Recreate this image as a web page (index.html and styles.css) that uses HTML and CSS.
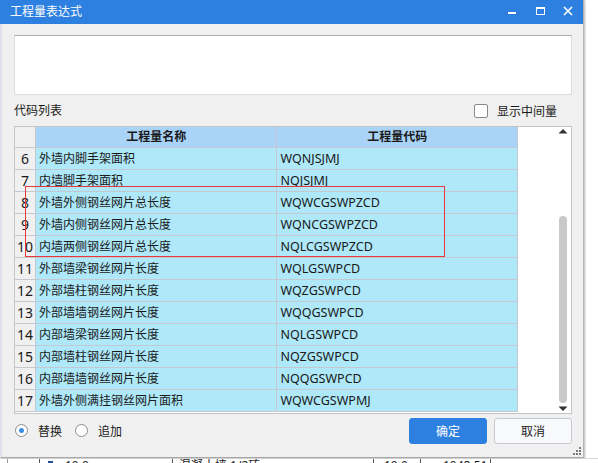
FILE: index.html
```html
<!DOCTYPE html>
<html lang="zh-CN">
<head>
<meta charset="utf-8">
<title>工程量表达式</title>
<link rel="stylesheet" href="styles.css">
</head>
<body>
<div class="screen">
  <div class="top">
    <div class="dialog">
      <div class="titlebar">
        <span class="title">工程量表达式</span>
        <div class="controls">
          <svg class="ctl" width="28" height="24" viewBox="0 0 28 24"><rect x="10" y="12" width="8" height="2" fill="#fff"/></svg>
          <svg class="ctl" width="28" height="24" viewBox="0 0 28 24"><rect x="10.5" y="7.5" width="8" height="7" fill="none" stroke="#fff" stroke-width="1"/><rect x="10" y="7" width="9" height="2" fill="#fff"/></svg>
          <svg class="ctl" width="28" height="24" viewBox="0 0 28 24"><path d="M10 7 L18 15 M18 7 L10 15" stroke="#fff" stroke-width="1.6"/></svg>
        </div>
      </div>
      <div class="body">
        <div class="expr"></div>
        <div class="listhead">
          <span class="label">代码列表</span>
          <label class="chk"><span class="box"></span><span>显示中间量</span></label>
        </div>
        <div class="table">
          <div class="grid">
            <div class="row head">
              <div class="num"></div>
              <div class="name">工程量名称</div>
              <div class="code">工程量代码</div>
            </div>
            <div class="row"><div class="num">6</div><div class="name">外墙内脚手架面积</div><div class="code">WQNJSJMJ</div></div>
            <div class="row"><div class="num">7</div><div class="name">内墙脚手架面积</div><div class="code">NQJSJMJ</div></div>
            <div class="row"><div class="num">8</div><div class="name">外墙外侧钢丝网片总长度</div><div class="code">WQWCGSWPZCD</div></div>
            <div class="row"><div class="num">9</div><div class="name">外墙内侧钢丝网片总长度</div><div class="code">WQNCGSWPZCD</div></div>
            <div class="row"><div class="num">10</div><div class="name">内墙两侧钢丝网片总长度</div><div class="code">NQLCGSWPZCD</div></div>
            <div class="row"><div class="num">11</div><div class="name">外部墙梁钢丝网片长度</div><div class="code">WQLGSWPCD</div></div>
            <div class="row"><div class="num">12</div><div class="name">外部墙柱钢丝网片长度</div><div class="code">WQZGSWPCD</div></div>
            <div class="row"><div class="num">13</div><div class="name">外部墙墙钢丝网片长度</div><div class="code">WQQGSWPCD</div></div>
            <div class="row"><div class="num">14</div><div class="name">内部墙梁钢丝网片长度</div><div class="code">NQLGSWPCD</div></div>
            <div class="row"><div class="num">15</div><div class="name">内部墙柱钢丝网片长度</div><div class="code">NQZGSWPCD</div></div>
            <div class="row"><div class="num">16</div><div class="name">内部墙墙钢丝网片长度</div><div class="code">NQQGSWPCD</div></div>
            <div class="row"><div class="num">17</div><div class="name">外墙外侧满挂钢丝网片面积</div><div class="code">WQWCGSWPMJ</div></div>
          </div>
          <div class="scrollbar">
            <svg class="arrow" width="12" height="8" viewBox="0 0 12 8"><path d="M1.5 6.5 L6 2 L10.5 6.5 Z" fill="#333"/></svg>
            <div class="track"><div class="thumb"></div></div>
            <svg class="arrow" width="12" height="8" viewBox="0 0 12 8"><path d="M1.5 1.5 L6 6 L10.5 1.5 Z" fill="#333"/></svg>
          </div>
          <div class="mark"></div>
        </div>
        <div class="footer">
          <label class="radio"><span class="ring on"></span><span>替换</span></label>
          <label class="radio"><span class="ring"></span><span>追加</span></label>
          <div class="spacer"></div>
          <button class="btn primary">确定</button>
          <button class="btn">取消</button>
        </div>
        <div class="grip">
          <svg width="8" height="8" viewBox="0 0 8 8"><g fill="#7a7a7a"><rect x="6" y="0" width="2" height="2"/><rect x="3" y="3" width="2" height="2"/><rect x="6" y="3" width="2" height="2"/><rect x="0" y="6" width="2" height="2"/><rect x="3" y="6" width="2" height="2"/><rect x="6" y="6" width="2" height="2"/></g></svg>
        </div>
      </div>
    </div>
    <div class="side"></div>
  </div>
  <div class="bgrow">
    <div class="bgc c1"></div>
    <div class="bgc c2"></div>
    <div class="bgc c3"><span class="ico"></span><span>10.0</span></div>
    <div class="bgc c4">混凝土墙 1/2砖</div>
    <div class="bgc c5">10.0</div>
    <div class="bgc c6">1048.51</div>
    <div class="bgc c7"></div>
  </div>
</div>
</body>
</html>
```
FILE: styles.css
```css
* { box-sizing: border-box; }
html, body { margin: 0; padding: 0; }
body {
  font-family: "Noto Sans", "Noto Sans CJK SC", sans-serif;
  font-size: 12px;
  color: #1a1a1a;
  background: #fff;
}
.screen {
  width: 598px;
  height: 463px;
  overflow: hidden;
  display: flex;
  flex-direction: column;
  background: #fff;
}
.top { display: flex; height: 458px; flex: none; }
.dialog {
  width: 584px;
  height: 458px;
  display: flex;
  flex-direction: column;
  background: #f0f0f0;
  border-left: 2px solid #dfe2ea;
  border-right: 1px solid #b4b4b4;
  border-bottom: 1px solid #a8a8a8;
  box-shadow: 1px 1px 0 #d0d0d0;
  position: relative;
}
.side {
  flex: 1;
  background: #fff;
  border-left: 2px solid #e4e4e4;
}
.titlebar {
  height: 24px;
  flex: none;
  background: #2e80e0;
  display: flex;
  align-items: center;
  margin-left: -2px;
  padding-left: 10px;
}
.title { color: #fff; font-size: 12px; line-height: 24px; flex: 1; }
.controls { display: flex; margin-right: 1px; }
.ctl { display: block; }
.body {
  flex: 1;
  display: flex;
  flex-direction: column;
  padding: 11px 11px 0 12px;
  position: relative;
}
.expr {
  height: 60px;
  flex: none;
  background: #fff;
  border: 1px solid #dadde4;
  border-top-color: #a9a9a9;
}
.listhead {
  height: 31px;
  flex: none;
  display: flex;
  align-items: center;
  padding-top: 1px;
}
.label { flex: 1; line-height: 16px; }
.chk { display: flex; align-items: center; margin-right: 15px; }
.box {
  width: 14px;
  height: 14px;
  border: 1px solid #8a8a8a;
  border-radius: 2px;
  background: #fff;
  margin-right: 9px;
}
.table {
  height: 288px;
  flex: none;
  background: #fff;
  border: 1px solid #c4c4c4;
  display: flex;
  position: relative;
}
.grid { width: 503px; flex: none; }
.row { display: flex; height: 22px; }
.row.head { height: 21px; }
.row > div {
  border-right: 1px solid #c4c9d1;
  border-bottom: 1px solid #c4c9d1;
  line-height: 21px;
  white-space: nowrap;
  overflow: hidden;
}
.num {
  width: 21px;
  background: #f0f0f0;
  text-align: center;
  font-size: 14px;
}
.name { width: 242px; background: #aee8f9; padding-left: 3px; font-size: 12px; }
.code { width: 241px; background: #aee8f9; padding-left: 3px; font-size: 12.5px; }
.head .name, .head .code {
  background: #aad3f8;
  text-align: center;
  font-weight: bold;
  padding-left: 0;
  line-height: 20px;
  font-size: 12px;
}
.head .num { line-height: 20px; }
.scrollbar {
  margin-left: auto;
  width: 14px;
  margin-right: 1px;
  display: flex;
  flex-direction: column;
  align-items: center;
}
.arrow { display: block; flex: none; margin-top: 0; }
.track { flex: 1; position: relative; width: 100%; }
.thumb {
  position: absolute;
  left: 3px;
  width: 8px;
  top: 81px;
  bottom: 2px;
  background: #c9c9c9;
  border-radius: 4px;
}
.mark {
  position: absolute;
  left: 10px;
  top: 59px;
  width: 420px;
  height: 71px;
  border: 1px solid #e8383a;
  pointer-events: none;
}
.footer {
  flex: 1;
  display: flex;
  align-items: center;
  padding-bottom: 10px;
}
.radio { display: flex; align-items: center; margin-right: 12px; margin-left: 1px; }
.ring {
  width: 13px;
  height: 13px;
  border: 1px solid #8c8c8c;
  border-radius: 50%;
  background: #fff;
  margin-right: 10px;
  position: relative;
}
.ring.on::after {
  content: "";
  position: absolute;
  left: 3px; top: 3px;
  width: 5px; height: 5px;
  border-radius: 50%;
  background: #3a8ee6;
}
.spacer { flex: 1; }
.btn {
  width: 78px;
  height: 26px;
  font-family: inherit;
  font-size: 12px;
  border-radius: 3px;
  border: 1px solid #c6cad3;
  background: #f8f9fb;
  color: #1a1a1a;
  margin-left: 7px;
  padding: 0;
}
.btn.primary { background: #2e80e0; border-color: #2e80e0; color: #fff; margin-left: 0; }
.grip { position: absolute; right: 2px; bottom: 2px; line-height: 0; }
.bgrow {
  height: 5px;
  flex: none;
  display: flex;
  background: #fff;
  border-top: 1px solid #d6d6d6;
  overflow: hidden;
  font-size: 12px;
}
.bgc {
  border-right: 1px solid #555;
  line-height: 14px;
  margin-top: 0;
  padding-left: 6px;
  white-space: nowrap;
  display: flex;
  align-items: flex-start;
}
.c1 { width: 8px; padding: 0; border-right-color: #999; }
.c2 { width: 32px; padding: 0; }
.c3 { width: 133px; padding-left: 8px; }
.ico { width: 5px; height: 6px; background: #2450a0; margin-top: 2px; margin-right: 12px; }
.c4 { width: 201px; }
.c5 { width: 47px; padding-left: 10px; }
.c6 { width: 70px; padding-left: 22px; }
.c7 { flex: 1; border-right: none; }
```
